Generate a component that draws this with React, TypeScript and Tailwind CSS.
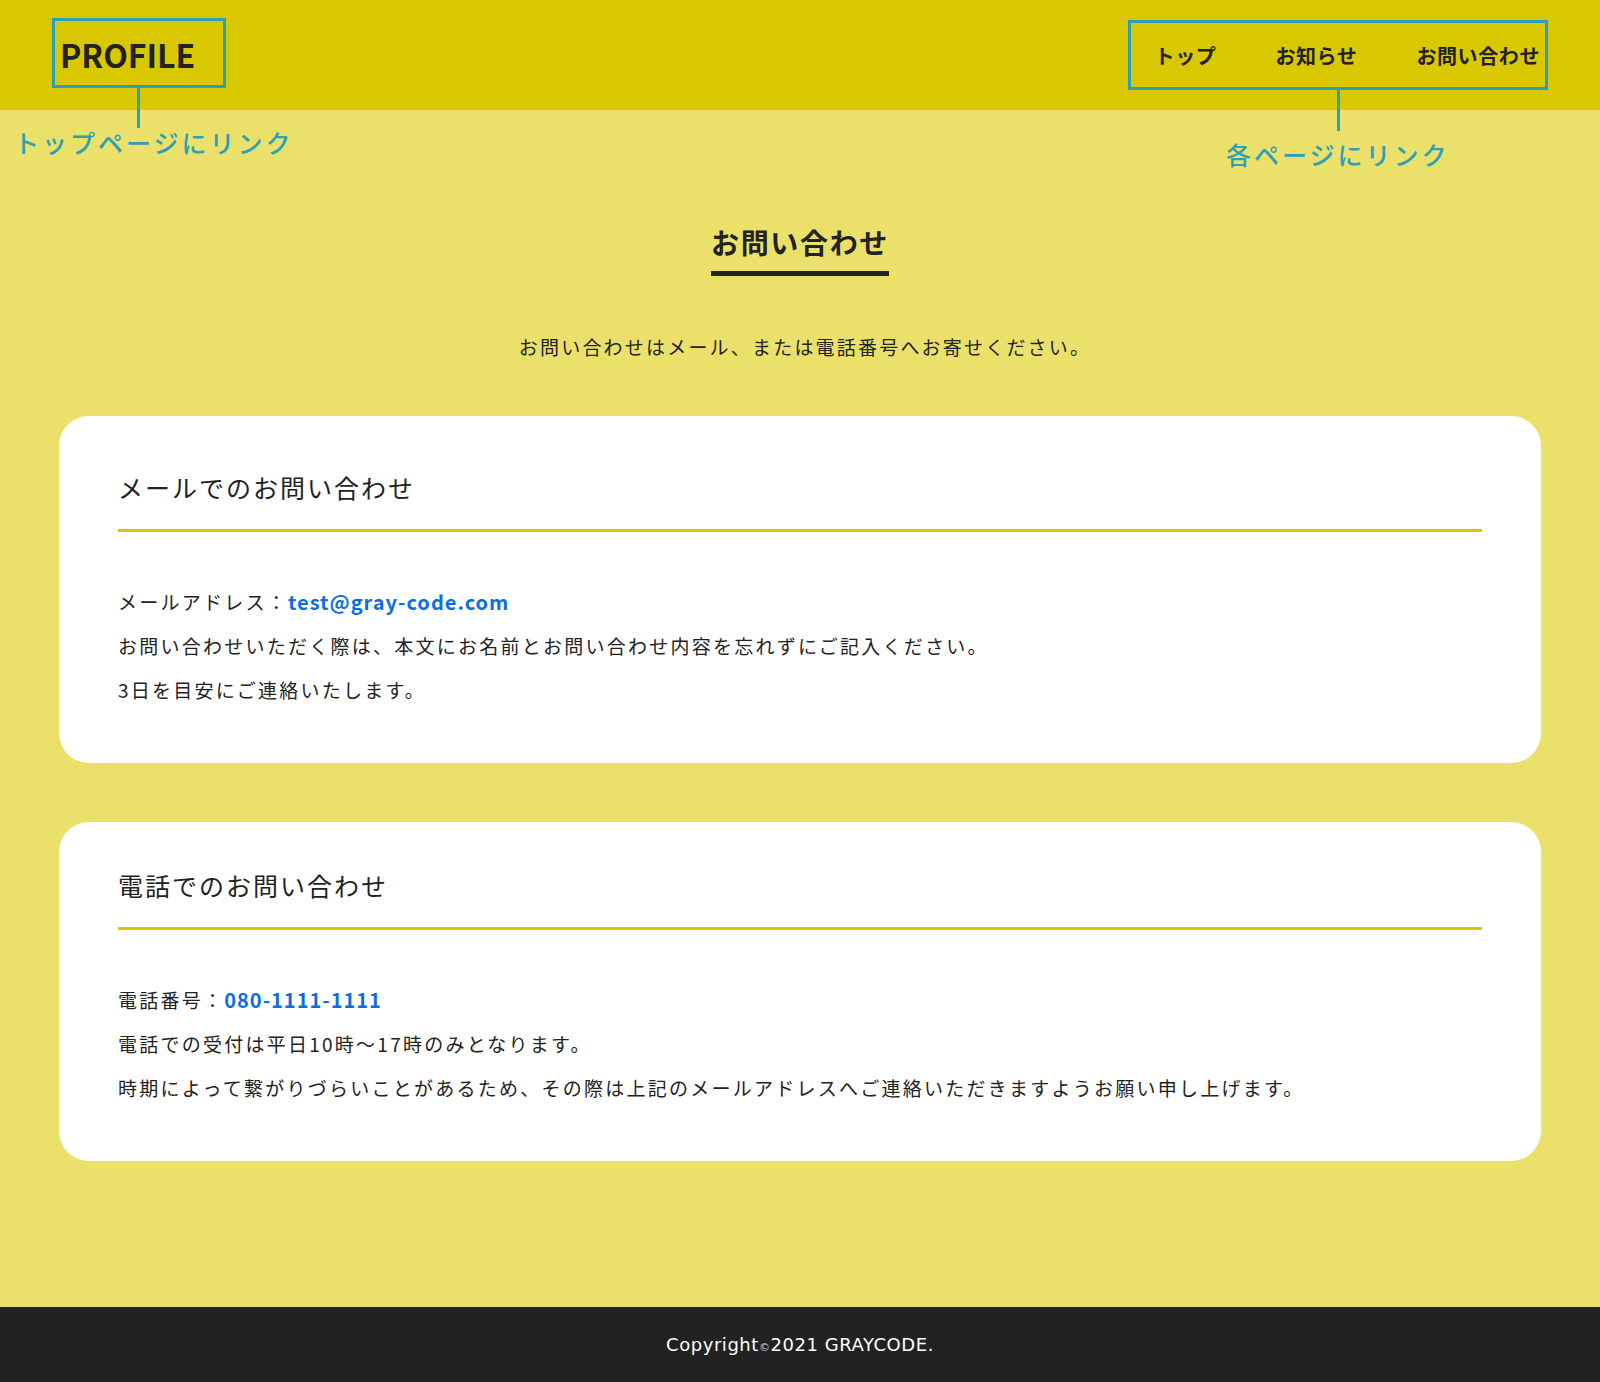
const FONT = { fontFamily: '"Noto Sans CJK JP", "Noto Sans", sans-serif' }

const NAV = ['トップ', 'お知らせ', 'お問い合わせ']

function Card({ title, top, children }: { title: string; top: string; children: React.ReactNode }) {
  return (
    <section className={`bg-white rounded-[30px] px-[59px] pb-[51px] ${top}`}>
      <h2 className="text-[25px] leading-[36px] tracking-[2px] text-[#222] pb-[24px] border-b-[3px] border-[#d9c800]">
        {title}
      </h2>
      <div className="mt-[48px] text-[19px] leading-[44px] tracking-[2.25px] text-[#222]">{children}</div>
    </section>
  )
}

export default function App() {
  return (
    <div className="relative min-h-screen flex flex-col bg-[#ebe16a]" style={FONT}>
      {/* header */}
      <header className="h-[110px] bg-[#d9c800] flex items-center justify-between px-[60px]">
        <a className="text-[32px] font-bold text-[#222] mb-[3px]">PROFILE</a>
        <nav className="flex gap-[59px] text-[20px] font-bold tracking-[0.03em] text-[#222] pt-[2px]">
          {NAV.map(n => (
            <a key={n}>{n}</a>
          ))}
        </nav>
      </header>

      {/* annotations */}
      <div className="absolute left-[52px] top-[18px] w-[174px] h-[70px] border-[3px] border-[#2aa1b9]" />
      <div className="absolute left-[137px] top-[88px] w-[3px] h-[40px] bg-[#2aa1b9]" />
      <div className="absolute left-[14px] top-[127px] text-[25px] leading-[30px] font-medium tracking-[3px] text-[#2aa1b9]">
        トップページにリンク
      </div>
      <div className="absolute left-[1128px] top-[20px] w-[420px] h-[70px] border-[3px] border-[#2aa1b9]" />
      <div className="absolute left-[1337px] top-[90px] w-[3px] h-[41px] bg-[#2aa1b9]" />
      <div className="absolute left-[1226px] top-[139px] text-[25px] leading-[30px] font-medium tracking-[3px] text-[#2aa1b9]">
        各ページにリンク
      </div>

      <main className="flex-1 px-[59px] pt-[110px]">
        <div className="text-center">
          <h1 className="inline-block text-[28px] leading-[44px] font-bold tracking-[0.06em] text-[#222] pb-[7px] border-b-[5px] border-[#222]">
            お問い合わせ
          </h1>
          <p className="mt-[56px] pl-[10px] text-[19px] leading-[30px] tracking-[2.2px] text-[#222]">
            お問い合わせはメール、または電話番号へお寄せください。
          </p>
        </div>

        <div className="mt-[54px] flex flex-col gap-[59px]">
          <Card title="メールでのお問い合わせ" top="pt-[53px]">
            <p>
              メールアドレス：<a className="font-bold text-[20px] tracking-[1px] text-[#0c6fdc]">test@gray-code.com</a>
            </p>
            <p>お問い合わせいただく際は、本文にお名前とお問い合わせ内容を忘れずにご記入ください。</p>
            <p>3日を目安にご連絡いたします。</p>
          </Card>
          <Card title="電話でのお問い合わせ" top="pt-[45px]">
            <p>
              電話番号：<a className="font-bold text-[20px] tracking-[1px] text-[#0c6fdc]">080-1111-1111</a>
            </p>
            <p>電話での受付は平日10時〜17時のみとなります。</p>
            <p>時期によって繋がりづらいことがあるため、その際は上記のメールアドレスへご連絡いただきますようお願い申し上げます。</p>
          </Card>
        </div>
      </main>

      <footer className="h-[75px] bg-[#222] flex items-center justify-center">
        <p className="text-[18px] text-white tracking-[0.03em]" style={{ fontFamily: '"DejaVu Sans", sans-serif' }}>
          Copyright<span className="text-[11px] text-gray-300">©</span>2021 GRAYCODE.
        </p>
      </footer>
    </div>
  )
}
